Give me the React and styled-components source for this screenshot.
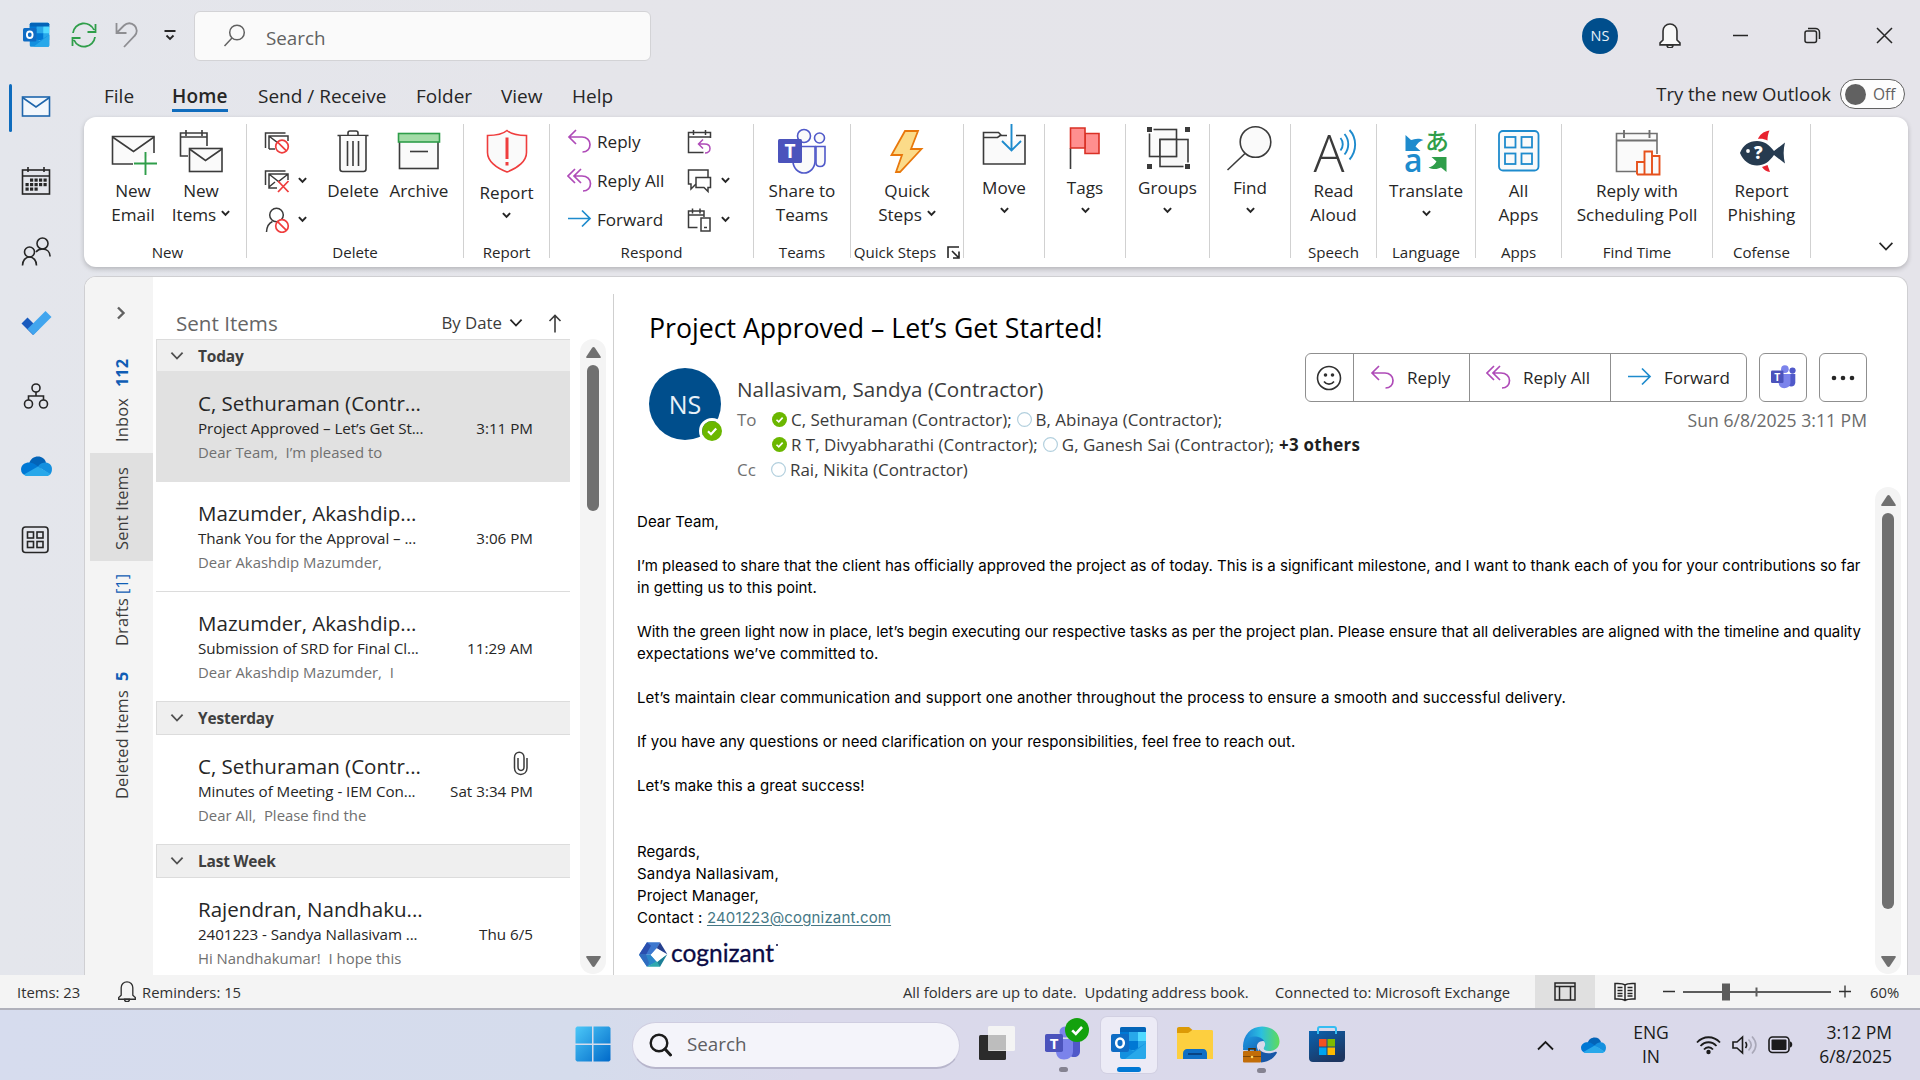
import React from "react";
import styled, { createGlobalStyle, css } from "styled-components";

const UI = `"Open Sans", "Noto Sans", sans-serif`;
const BODY = `Inter, Roboto, "Liberation Sans", sans-serif`;

const Global = createGlobalStyle`
  * { box-sizing: border-box; }
  body { margin: 0; overflow: hidden; font-family: ${UI}; color: #262626; }
  svg { display: block; flex: none; }
`;

/* ---------- shell ---------- */

const Desktop = styled.div`
  width: 1920px;
  height: 1080px;
  display: flex;
  flex-direction: column;
  background: linear-gradient(90deg, #e4e6ec 0%, #e5e5ea 30%, #e5e4ea 100%);
`;

const TitleBar = styled.header`
  height: 72px;
  display: flex;
  align-items: flex-start;
  padding: 11px 0 0 23px;
`;

const QuickAccess = styled.div`
  width: 171px;
  height: 50px;
  display: flex;
  align-items: center;
  padding-bottom: 2px;
`;

const QuickButton = styled.div`
  width: ${(p) => p.$w}px;
  display: flex;
`;

const SearchBox = styled.div`
  width: 457px;
  height: 50px;
  display: flex;
  align-items: center;
  padding: 0 0 2px 28px;
  gap: 20px;
  background: #fafafa;
  border: 1px solid #d3d3d6;
  border-radius: 6px;
  font-size: 18.8px;
  line-height: 24px;
  color: #616161;
  span { padding-top: 6px; }
`;

const WindowControls = styled.div`
  margin-left: auto;
  display: flex;
  align-items: center;
  height: 50px;
  padding-bottom: 1px;
`;

const Avatar = styled.div`
  width: ${(p) => p.$size}px;
  height: ${(p) => p.$size}px;
  flex: none;
  margin-right: ${(p) => p.$gap || 0}px;
  border-radius: 50%;
  background: #004e8c;
  color: #e8f1f8;
  font-size: ${(p) => p.$font}px;
  display: flex;
  align-items: center;
  justify-content: center;
  position: relative;
`;

const ControlSlot = styled.div`
  width: 72px;
  padding-left: ${(p) => p.$nudge || 0}px;
  display: flex;
  justify-content: center;
`;

const Middle = styled.div`
  height: 903px;
  display: flex;
`;

const Rail = styled.nav`
  width: 84px;
  display: flex;
  flex-direction: column;
  padding-top: 12px;
`;

const RailItem = styled.div`
  height: ${(p) => p.$h || 72}px;
  padding-left: 9px;
  display: flex;
  align-items: flex-start;
  svg { margin: 10px 0 0 9px; }
`;

const RailMarker = styled.div`
  width: 3px;
  height: 48px;
  border-radius: 2px;
  background: ${(p) => (p.$on ? "#0f6cbd" : "transparent")};
`;

const Main = styled.main`
  width: 1836px;
  display: flex;
  flex-direction: column;
`;

const TabRow = styled.div`
  height: 45px;
  display: flex;
  align-items: flex-start;
  padding: 11px 15px 0 20px;
`;

const Tab = styled.div`
  width: ${(p) => p.$w}px;
  font-size: 19px;
  line-height: 26px;
  font-weight: ${(p) => (p.$active ? 600 : 400)};
  letter-spacing: ${(p) => (p.$active ? 0.2 : 0)}px;
  white-space: nowrap;
  span {
    display: inline-block;
    border-bottom: 3px solid ${(p) => (p.$active ? "#0f6cbd" : "transparent")};
  }
`;

const TryNew = styled.div`
  margin: -4px 0 0 auto;
  display: flex;
  align-items: center;
  gap: 9px;
  font-size: 18.5px;
  line-height: 24px;
`;

const Toggle = styled.div`
  width: 65px;
  height: 30px;
  border: 1.5px solid #616161;
  border-radius: 15px;
  background: #fdfdfd;
  display: flex;
  align-items: center;
  gap: 7px;
  padding-left: 4px;
  font-size: 15.5px;
  color: #616161;
`;

const Knob = styled.div`
  width: 21px;
  height: 21px;
  border-radius: 50%;
  background: #616161;
`;

/* ---------- ribbon ---------- */

const Ribbon = styled.section`
  width: 1824px;
  height: 150px;
  background: #fff;
  border-radius: 12px;
  box-shadow: 0 2px 5px rgba(0, 0, 0, 0.22);
  display: flex;
  padding: 7px 0 9px;
`;

const Group = styled.div`
  width: ${(p) => p.$w}px;
  height: 134px;
  border-right: 1px solid #d1d1d1;
  display: flex;
  flex-direction: column;
`;

const GroupContent = styled.div`
  flex: 1;
  display: flex;
  justify-content: ${(p) => (p.$left !== undefined ? "flex-start" : "center")};
  padding-left: ${(p) => p.$left || 0}px;
`;

const GroupLabel = styled.div`
  height: 12px;
  line-height: 12px;
  padding-left: ${(p) => p.$shift || 0}px;
  display: flex;
  justify-content: center;
  gap: 11px;
  font-size: 15.1px;
  white-space: nowrap;
`;

const BigButton = styled.div`
  width: ${(p) => p.$w || 70}px;
  display: flex;
  flex-direction: column;
  align-items: center;
  font-size: 17.1px;
  line-height: 24px;
  white-space: nowrap;
  svg.art { margin-bottom: ${(p) => p.$drop || 0}px; }
`;

const LabelLine = styled.span`
  height: 24px;
  display: flex;
  align-items: center;
  gap: 5px;
  svg { margin-bottom: 3px; }
`;

const SmallColumn = styled.div`
  width: ${(p) => p.$w}px;
  margin-top: -2px;
  display: flex;
  flex-direction: column;
`;

const SmallButton = styled.div`
  height: 39px;
  display: flex;
  align-items: center;
  gap: ${(p) => p.$gap || 5}px;
  font-size: 17.1px;
  white-space: nowrap;
`;

const RibbonEnd = styled.div`
  flex: 1;
  display: flex;
  justify-content: flex-end;
  align-items: flex-end;
  padding: 0 14px 6px 0;
`;

/* ---------- panel ---------- */

const Panel = styled.section`
  width: 1824px;
  height: 699px;
  margin-top: 9px;
  border: 1px solid #cfcfd2;
  border-bottom: 0;
  border-radius: 12px 12px 0 0;
  background: #fff;
  display: flex;
  overflow: hidden;
`;

const FolderStrip = styled.div`
  width: 68px;
  flex: none;
  background: #f4f4f4;
  padding-left: 5px;
  display: flex;
  flex-direction: column;
`;

const StripToggle = styled.div`
  height: 73px;
  padding: 29px 0 0 26px;
`;

const Folder = styled.div`
  height: ${(p) => p.$h}px;
  background: ${(p) => (p.$selected ? "#e0e0e0" : "transparent")};
  writing-mode: vertical-rl;
  transform: rotate(180deg);
  display: flex;
  align-items: center;
  padding: ${(p) => p.$pad}px 0 0 0;
  gap: ${(p) => p.$gap || 0}px;
  font-size: 16.4px;
  line-height: 61px;
  letter-spacing: 0.2px;
  color: #3b3b3b;
  white-space: nowrap;
`;

const Count = styled.span`
  color: #0f5db5;
  font-weight: ${(p) => (p.$light ? 400 : 700)};
  letter-spacing: 0;
`;

const ListPane = styled.div`
  width: 427px;
  flex: none;
  padding-left: 3px;
  display: flex;
  flex-direction: column;
`;

const ListHeader = styled.div`
  height: 62px;
  display: flex;
  align-items: center;
  padding: 30px 18px 0 20px;
  font-size: 20.6px;
  line-height: 30px;
  color: #666;
`;

const SortBy = styled.div`
  margin-left: auto;
  display: flex;
  align-items: center;
  font-size: 16.8px;
  color: #3b3b3b;
  gap: 7px;
  padding-right: 25px;
`;

const DateHeader = styled.div`
  width: 414px;
  height: ${(p) => p.$h}px;
  flex: none;
  display: flex;
  align-items: center;
  padding-left: 13px;
  gap: 14px;
  background: #efefef;
  border: 1px solid #dcdcdc;
  border-right: 0;
  ${(p) => p.$first && css`border-bottom: 0; padding-top: 1px;`}
  font-size: 15.5px;
  font-weight: 700;
  letter-spacing: -0.2px;
  color: #3f3f3f;
`;

const Message = styled.article`
  width: 414px;
  height: ${(p) => p.$h}px;
  flex: none;
  padding: ${(p) => p.$top}px 37px 0 42px;
  background: ${(p) => (p.$selected ? "#e1e1e1" : "#fff")};
  border-bottom: ${(p) => (p.$line ? "1px solid #dcdcdc" : "0")};
`;

const MessageRow = styled.div`
  display: flex;
  justify-content: space-between;
  align-items: center;
  white-space: pre;
  height: ${(p) => p.$h}px;
  font-size: ${(p) => p.$font}px;
  color: ${(p) => p.$color || "#262626"};
  span:first-child { letter-spacing: ${(p) => p.$ls || 0}px; }
`;

const ClipSlot = styled.div`
  margin: 0 5px 5px 0;
`;

const ScrollTrack = styled.div`
  width: 26px;
  height: ${(p) => p.$h}px;
  margin-top: ${(p) => p.$top}px;
  flex: none;
  border-radius: 13px;
  background: #f4f4f4;
  display: flex;
  flex-direction: column;
  align-items: center;
  justify-content: space-between;
  padding: 8px 0 7px;
`;

const ScrollUpper = styled.div`
  display: flex;
  flex-direction: column;
  align-items: center;
  gap: 7px;
`;

const Thumb = styled.div`
  width: 12px;
  height: ${(p) => p.$h}px;
  border-radius: 6px;
  background: #707070;
`;

const Divider = styled.div`
  width: 1px;
  flex: none;
  margin: 17px 0 0 7px;
  background: #cfcfcf;
`;

/* ---------- reading pane ---------- */

const Reader = styled.div`
  width: 1293px;
  flex: none;
  display: flex;
  flex-direction: column;
`;

const Subject = styled.h1`
  margin: 0;
  height: 91px;
  padding: 34px 0 0 35px;
  font-size: 26.7px;
  line-height: 34px;
  font-weight: 400;
  color: #000;
`;

const MailHead = styled.div`
  height: 119px;
  display: flex;
  padding-left: 35px;
`;

const Presence = styled.div`
  position: absolute;
  right: -4px;
  bottom: -4px;
  border: 3px solid #fff;
  border-radius: 50%;
`;

const People = styled.div`
  width: 0;
  flex: 1;
  margin-left: 16px;
  padding-top: 7px;
`;

const SenderName = styled.div`
  font-size: 20.65px;
  line-height: 29px;
  height: 32px;
  color: #3b3b3b;
  white-space: nowrap;
`;

const AddressRow = styled.div`
  display: flex;
  align-items: center;
  height: 25.2px;
  font-size: 16.95px;
  color: #3b3b3b;
  white-space: nowrap;
`;

const AddressLabel = styled.span`
  width: ${(p) => p.$w || 35}px;
  flex: none;
  color: #707070;
`;

const Person = styled.span`
  display: flex;
  align-items: center;
  gap: 4px;
  margin-right: 5px;
`;

const Others = styled.b`
  color: #1f1f1f;
  font-weight: 700;
  letter-spacing: 0.25px;
`;

const HeadSide = styled.div`
  flex: none;
  padding-right: 40px;
  margin-top: -15px;
`;

const Actions = styled.div`
  display: flex;
  gap: 12px;
`;

const ActionGroup = styled.div`
  height: 49px;
  display: flex;
  border: 1.5px solid #8f8f8f;
  border-radius: 6px;
`;

const Action = styled.div`
  width: ${(p) => p.$w}px;
  display: flex;
  align-items: center;
  padding-left: ${(p) => p.$left}px;
  gap: 12px;
  font-size: 17px;
  color: #262626;
  white-space: nowrap;
  & + & { border-left: 1.5px solid #8f8f8f; }
`;

const SentAt = styled.div`
  margin-top: 6px;
  text-align: right;
  font-size: 17.6px;
  line-height: 24px;
  color: #6b6b6b;
`;

const MailBodyRow = styled.div`
  flex: 1;
  display: flex;
`;

const MailBody = styled.div`
  width: 1261px;
  flex: none;
  padding: 24px 0 0 23px;
  font-family: ${BODY};
  font-size: 15px;
  color: #000;
`;

const Line = styled.p`
  margin: 0;
  height: 22px;
  line-height: 22px;
  white-space: nowrap;
  letter-spacing: ${(p) => p.$ls || 0}px;
  a { color: #467886; text-decoration: underline; text-underline-offset: 2px; }
`;

const Signature = styled.div`
  padding-top: 10px;
`;

/* ---------- status bar ---------- */

const StatusBar = styled.footer`
  height: 35px;
  background: #f4f4f4;
  border-bottom: 2px solid #b0b1bb;
  display: flex;
  align-items: center;
  font-size: 14.8px;
  color: #303030;
  white-space: pre;
`;

const StatusText = styled.span`
  width: ${(p) => p.$w}px;
  padding-left: ${(p) => p.$left || 0}px;
`;

const ViewButton = styled.div`
  width: 60px;
  height: 33px;
  display: flex;
  align-items: center;
  justify-content: center;
  background: ${(p) => (p.$on ? "#e0e0e0" : "transparent")};
`;

/* ---------- taskbar ---------- */

const Taskbar = styled.div`
  height: 70px;
  display: flex;
  align-items: center;
  background: linear-gradient(90deg, #d6dcee 0%, #d5dcec 30%, #dad9eb 42%, #dad9ea 100%);
`;

const TaskIcons = styled.div`
  width: 963px;
  padding-left: 565px;
  display: flex;
  align-items: center;
`;

const TaskSearch = styled.div`
  width: 328px;
  height: 47px;
  flex: none;
  margin: 0 9px 0 1px;
  border-radius: 24px;
  border: 1px solid #cfcde0;
  border-bottom: 2px solid #b7b5cb;
  background: #f4f4fa;
  display: flex;
  align-items: center;
  padding-left: 16px;
  gap: 15px;
  font-size: 18.8px;
  color: #5d5d62;
  span { padding-bottom: 1px; }
`;

const TaskTile = styled.div`
  width: 56px;
  height: 56px;
  flex: none;
  margin-right: 10px;
  border-radius: 6px;
  display: flex;
  flex-direction: column;
  align-items: center;
  padding-top: 9px;
  position: relative;
  ${(p) => p.$active && css`background: #ecebf6; box-shadow: 0 0 0 1px #d2d0e2;`}
`;

const RunningMark = styled.i`
  width: ${(p) => (p.$active ? 24 : 9)}px;
  height: 5px;
  margin-top: 5px;
  border-radius: 3px;
  background: ${(p) => (p.$active ? "#0078d4" : "#858391")};
`;

const TileBadge = styled.div`
  position: absolute;
  right: 2px;
  top: 1px;
`;

const Tray = styled.div`
  margin-left: auto;
  display: flex;
  align-items: center;
  padding-right: 28px;
`;

const TraySlot = styled.div`
  margin-right: ${(p) => p.$gap}px;
`;

const TrayText = styled.div`
  width: ${(p) => p.$w}px;
  padding-bottom: 1px;
  text-align: ${(p) => p.$align};
  font-size: 17.5px;
  line-height: 23.5px;
  color: #191919;
  white-space: nowrap;
`;

/* ---------- icons ---------- */

const D = "#3b3b3b";
const art = { className: "art", width: 48, height: 55, viewBox: "0 0 48 55", fill: "none", strokeWidth: 1.6 };

const Caret = ({ s = 10, w = 2, c = "#262626" }) => (
  <svg width={s} height={s * 0.7} viewBox="0 0 10 7" fill="none" stroke={c} strokeWidth={w * (10 / s)}>
    <path d="M1 1.2 5 5.4 9 1.2" />
  </svg>
);

const ReplyIcon = () => (
  <svg width="25" height="25" viewBox="0 0 25 25" fill="none" stroke="#af4bb8" strokeWidth="1.7">
    <path d="M9 1 2 8l7 7M2 8h13c4.500 0 8 3 8 7.500S20 23 15.500 23" />
  </svg>
);
const ReplyAllIcon = () => (
  <svg width="25" height="25" viewBox="0 0 25 25" fill="none" stroke="#af4bb8" strokeWidth="1.7">
    <path d="M8 1 1 8l7 7M14 1 7 8l7 7M7 8h8c5 0 8.500 3 8.500 7.500S20.500 23 16 23" />
  </svg>
);
const ForwardIcon = () => (
  <svg width="25" height="25" viewBox="0 0 25 25" fill="none" stroke="#1e8bcd" strokeWidth="1.7">
    <path d="M1 11.500h22M15 3.500l8 8-8 8" />
  </svg>
);

const OutlookIcon = ({ size }) => (
  <svg width={size} height={size} viewBox="0 0 36 36">
    <rect x="9" y="1" width="26" height="24" rx="2" fill="#28a8ea" />
    <path d="M9 3a2 2 0 0 1 2-2h22a2 2 0 0 1 2 2v4H9z" fill="#0364b8" />
    <path d="M18 6h9v9h-9z" fill="#28a8ea" />
    <path d="M27 6h8v9h-8z" fill="#50d9ff" />
    <path d="M9 6h9v9H9z" fill="#0078d4" />
    <path d="M9 15h9v9H9z" fill="#0358a7" />
    <path d="M18 15h9v9h-9z" fill="#0078d4" />
    <path d="M9 18l13 7 13-8v14a2 2 0 0 1-2 2H11a2 2 0 0 1-2-2z" fill="#1490df" />
    <path d="M35 17v14a2 2 0 0 1-2 2H14z" fill="#28a8ea" />
    <rect x="0" y="8" width="18" height="18" rx="2" fill="#0f6cc4" />
    <ellipse cx="9" cy="17" rx="3.800" ry="4.400" fill="none" stroke="#fff" strokeWidth="2.500" />
  </svg>
);

const SyncIcon = () => (
  <svg width="26" height="26" viewBox="0 0 26 26" fill="none" stroke="#2f9e4a" strokeWidth="1.8">
    <path d="M2 11A11 11 0 0 1 23 8M24.500 2v8h-8M24 15A11 11 0 0 1 3 18M1.500 24v-8h8" />
  </svg>
);
const UndoIcon = () => (
  <svg width="24" height="26" viewBox="0 0 24 26" fill="none" stroke="#8e8e92" strokeWidth="1.8">
    <path d="M1.500 1v10h10M2 10.500 9 3.500c3-3 7.500-3 10.500 0s3 7.500 0 10.500L9 25" />
  </svg>
);
const CustomizeIcon = () => (
  <svg width="12" height="12" viewBox="0 0 12 12" fill="none" stroke="#262626">
    <path d="M.5 2h11" strokeWidth="2" /><path d="M2.500 6.500 6 10l3.500-3.500" strokeWidth="1.800" />
  </svg>
);
const SearchIcon = () => (
  <svg width="23" height="23" viewBox="0 0 23 23" fill="none" stroke="#616161" strokeWidth="1.5">
    <circle cx="14" cy="8.500" r="7.300" /><path d="M9 14l-7.500 8" />
  </svg>
);
const BellIcon = ({ w = 24, fill = "#f8f8f8" }) => (
  <svg width={w} height={w * 1.08} viewBox="0 0 24 26" fill={fill} stroke="#303030" strokeWidth="1.6">
    <path d="M9 22a3 3 0 0 0 6 0z" />
    <path d="M12 1c-4 0-7 3-7 7v9l-3 3v2h20v-2l-3-3V8c0-4-3-7-7-7z" />
  </svg>
);

const MailIcon = () => (
  <svg width="30" height="24" viewBox="0 0 30 24" fill="#f2f7fc" stroke="#1e66ac" strokeWidth="1.6">
    <rect x="1.500" y="3" width="27" height="19" /><path d="M1.500 3.500 15 13 28.500 3.500" fill="none" />
  </svg>
);
const CalendarIcon = () => (
  <svg width="30" height="30" viewBox="0 0 30 30" fill="none" stroke="#262626" strokeWidth="1.6">
    <rect x="1.500" y="4" width="27" height="24" /><path d="M1.500 10h27M7 1v5M23 1v5" />
    <g fill="#262626" stroke="none">
      {[[9.5, 12.5], [14, 12.5], [18.5, 12.5], [23, 12.5], [5, 17], [9.5, 17], [14, 17], [18.5, 17], [23, 17], [5, 21.5], [9.5, 21.5], [14, 21.5]].map(([x, y]) => (
        <rect key={x + "-" + y} x={x - 0.5} y={y} width="3.200" height="3.200" />
      ))}
    </g>
  </svg>
);
const PeopleIcon = () => (
  <svg width="30" height="30" viewBox="0 0 30 30" fill="none" stroke="#262626" strokeWidth="1.6">
    <circle cx="8.500" cy="15" r="5" /><path d="M1.500 28.500c0-5 3-8.500 7-8.500s7 3.500 7 8.500" />
    <circle cx="21.500" cy="6.500" r="5.500" /><path d="M15 15c1.500-2 3.500-3 6.500-3 4.500 0 7.500 3 7.500 7.500" />
  </svg>
);
const TodoIcon = () => (
  <svg width="31" height="26" viewBox="0 0 31 26">
    <path d="M.5 13.500 6.500 7.500 18 19l-6 6z" fill="#185abd" />
    <path d="M6.500 19 24.500 1l6 6L12.500 25z" fill="#41a5ee" />
  </svg>
);
const OrgIcon = () => (
  <svg width="30" height="26" viewBox="-2 0 30 26" fill="none" stroke="#262626" strokeWidth="1.6">
    <circle cx="13" cy="5" r="4" /><circle cx="5.500" cy="21" r="4" /><circle cx="20.500" cy="21" r="4" />
    <path d="M13 9v4M5.500 17v-4h15v4" />
  </svg>
);
const CloudIcon = ({ w = 31 }) => (
  <svg width={w} height={w * 0.66} viewBox="0 0 31 20.500">
    <path d="M8 8C9 3 13 .5 17 .5c4 0 7 2.500 8 6L17 14z" fill="#0364b8" />
    <path d="M0 13.500C0 9 4 6.500 8 6.500c3 0 5 1 7 2.500l6 4-16 6.500C2 19 0 16.500 0 13.500z" fill="#0078d4" />
    <path d="M17 10.500c2-3 5-4 8-4 3.500.5 6 3 6 6.500 0 3-1 4.500-2 5.500z" fill="#1490df" />
    <path d="M3 18.500 17 10.500l12.500 7.500c-1 1.500-3 2.500-5 2.500H7.500c-2 0-3.500-.8-4.500-2z" fill="#28a8ea" />
  </svg>
);
const AppsIcon = () => (
  <svg width="29" height="28" viewBox="-.5 0.500 29 28" fill="none" stroke="#262626" strokeWidth="1.6">
    <rect x="1" y="1.500" width="25.500" height="25.500" rx="3" />
    <rect x="6" y="6.500" width="6" height="6" /><rect x="15.500" y="6.500" width="6" height="6" />
    <rect x="6" y="16" width="6" height="6" /><rect x="15.500" y="16" width="6" height="6" />
  </svg>
);

const NewEmailArt = () => (
  <svg {...art} stroke={D}>
    <path d="M45 29V12.500H3.500V40H24" fill="#fafafa" /><path d="M3.500 13 24.500 27.500 45 13" />
    <path d="M25 39.500h23.500M36.500 28v23" stroke="#2f9e4a" strokeWidth="1.900" />
  </svg>
);
const NewItemsArt = () => (
  <svg {...art} stroke={D}>
    <path d="M30 22V9H3.500v23H11M3.500 13H30M9 6v6M25 6v6" fill="#fafafa" />
    <rect x="12.500" y="24.500" width="32.500" height="23" fill="#fafafa" /><path d="M12.500 25 28.500 36.500 45 25" />
  </svg>
);
const DeleteArt = () => (
  <svg {...art} stroke={D}>
    <path d="M8.500 11.500h31M19 11V9c0-1.500 1-2 2-2h6c1 0 2 .5 2 2v2" />
    <path d="M11 12v33c0 1.500 1 2.500 2.500 2.500h21c1.500 0 2.500-1 2.500-2.500V12" fill="#fafafa" /><path d="M18.500 17v25M24 17v25M29.500 17v25" />
  </svg>
);
const ArchiveArt = () => (
  <svg {...art} stroke={D}>
    <rect x="4.500" y="17" width="38.500" height="27.500" fill="#fafafa" />
    <rect x="3.500" y="9.500" width="41" height="8.500" fill="#a3dca7" stroke="#2f9e4a" /><path d="M15 27.500h18" />
  </svg>
);
const ReportArt = () => (
  <svg {...art} stroke="#ef3d3d">
    <path d="M24 6.500c4 3.500 9 5 19.500 5v17C43.500 37 35 44 24 48 13 44 4.500 37 4.500 28.500v-17c10 0 15.500-1.500 19.500-5z" fill="#fafafa" />
    <path d="M24 13.500v21.500M24 38v3.500" strokeWidth="3" />
  </svg>
);
const TeamsArt = () => (
  <svg {...art} stroke="#5059c9">
    <path d="M38 22.500h9v14.500c0 4-2.500 5.500-5 5.500s-4-1-4-4z" fill="#fafafa" />
    <path d="M15 22.500h22V37c0 7-5 12-11 12s-11-5-11-12z" fill="#fafafa" />
    <circle cx="26" cy="12" r="6.500" fill="#fafafa" /><circle cx="41.500" cy="14" r="5" fill="#fafafa" />
    <rect x="0" y="15" width="24" height="24" rx="1.500" fill="#4b53bc" stroke="none" />
    <text x="12" y="34" textAnchor="middle" fill="#fff" stroke="none" fontFamily="Open Sans" fontWeight="700" fontSize="19">T</text>
  </svg>
);
const QuickArt = () => (
  <svg {...art} stroke="#e8780c">
    <path d="M22 7h13L28 25h10.500L17 48h-4l6-17H8.500z" fill="#fbdb89" strokeWidth="1.800" />
  </svg>
);
const MoveArt = () => (
  <svg {...art} stroke={D}>
    <path d="M3.500 8.500h15l3 3H45V40H3.500z" fill="#fafafa" /><path d="M3.500 13.500h14l3.500-2.500" />
    <rect x="27" y="7" width="9" height="10" fill="#fff" stroke="none" />
    <path d="M31.500 0v26M22 17l9.500 9.500L41 17" stroke="#1e8bcd" strokeWidth="1.900" />
  </svg>
);
const TagsArt = () => (
  <svg {...art} stroke="#d93025">
    <path d="M9.500 24v21" stroke={D} /><path d="M24 9.500h14v20H24z" fill="#ff8f8f" />
    <path d="M9.500 4H24v20H9.500z" fill="#ff8f8f" />
  </svg>
);
const GroupsArt = () => (
  <svg {...art} stroke={D}>
    <rect x="5.500" y="5.500" width="27" height="27" fill="#fafafa" /><rect x="16" y="15.500" width="28" height="27" fill="#f4f4f4" fillOpacity=".6" />
    <rect x="16" y="15.500" width="16.500" height="17" fill="#fafafa" />
    <g fill="#fff" stroke="none"><rect x="2" y="2" width="7.500" height="7.500" /><rect x="39.500" y="38.500" width="7.500" height="7.500" /></g>
    <g fill={D} stroke="none"><rect x="3" y="3" width="5" height="5" /><rect x="41" y="3" width="5" height="5" /><rect x="3" y="40" width="5" height="5" /><rect x="41" y="40" width="5" height="5" /></g>
  </svg>
);
const FindArt = () => (
  <svg {...art} stroke={D}>
    <circle cx="29.500" cy="18" r="15.300" fill="#fafafa" /><path d="M19 29.500 1.500 46" />
  </svg>
);
const ReadArt = () => (
  <svg {...art}>
    <text x="3.500" y="47.500" fill={D} fontFamily="Open Sans" fontWeight="300" fontSize="51" textLength="31" lengthAdjust="spacingAndGlyphs">A</text>
    <path d="M30.500 14c3 3.500 3 9 0 12.500M34.500 10c5 6 5 14.500 0 20.500M39.500 6c7.500 8 7.500 21 0 29.500" stroke="#1e8bcd" strokeWidth="1.900" />
  </svg>
);
const TranslateArt = () => (
  <svg {...art}>
    <text x="23" y="26" fill="#2f9e4a" fontFamily="Noto Sans CJK JP" fontWeight="500" fontSize="24">あ</text>
    <text x="2" y="48" fill="#1e8bcd" fontFamily="Open Sans" fontWeight="600" fontSize="32">a</text>
    <path d="M3.500 11v16h15l-5-4.500c2-3.500 4.500-5.500 8-6.500-5-2.500-9.500-1-12.500 0z" fill="#1e8bcd" />
    <path d="M44.500 48V33h-15l5 4.500c-2 3.500-4.500 5-8 6 5 2.500 9.500 1.500 12.500 0z" fill="#2f9e4a" />
  </svg>
);
const AllAppsArt = () => (
  <svg {...art} stroke="#1e8bcd" fill="#fafafa" strokeWidth="1.800">
    <rect x="4" y="7" width="39.500" height="39.500" rx="4" />
    <rect x="10" y="13" width="10.500" height="10.500" /><rect x="26.500" y="13" width="10.500" height="10.500" />
    <rect x="10" y="29.500" width="10.500" height="10.500" /><rect x="26.500" y="29.500" width="10.500" height="10.500" />
  </svg>
);
const PollArt = () => (
  <svg {...art} stroke="#707070">
    <path d="M23 47.500H3.500v-38H44V30" fill="#fafafa" /><path d="M3.500 16.500H44M11 6v8M36.500 6v8" strokeWidth="1.900" />
    <path d="M24 50.500V38h7.500v12.500M31.500 50.500V27.500H39v23M39 32h7.500v18.500H24" stroke="#e6511c" strokeWidth="1.900" fill="#fafafa" />
  </svg>
);
const PhishArt = () => (
  <svg {...art}>
    <path d="M20 15C21.500 11 25 7.500 31.500 6.500 30 10 29.500 13 29.500 16.500 26 14.800 23 14.500 20 15z" fill="#e8222f" />
    <path d="M24 43l5.500-2 2.500 7c-3.500-.5-6-2-8-5z" fill="#e8222f" />
    <path d="M2 29C5 21 11 17 19 17c7 0 12 3.500 17 10l11-8.500c-1.800 7-1.800 14 0 21L36 31c-5 7-10 10.500-17 10.500S5 37 2 29z" fill="#263b50" />
    <circle cx="10" cy="27" r="1.900" fill="#fff" />
    <text x="16" y="35" fill="#fff" fontFamily="Open Sans" fontWeight="800" fontSize="17">?</text>
  </svg>
);

const Ban = ({ x, y }) => (
  <g stroke="#ef3d3d" strokeWidth="1.700"><circle cx={x} cy={y} r="6.300" fill="#fff" /><path d={`M${x - 4.4} ${y - 4.4}l8.800 8.800`} /></g>
);
const small = { width: 26, height: 26, viewBox: "0 0 26 26", fill: "none", stroke: D, strokeWidth: 1.5 };
const IgnoreIcon = () => (
  <svg {...small}>
    <path d="M1.500 19V4h20" /><path d="M5 20V7h19v5M5 20h6M5.500 7.500l8 6 3-2" /><Ban x={18} y={17.5} />
  </svg>
);
const CleanUpIcon = () => (
  <svg {...small}>
    <path d="M1.500 17V3h20" /><path d="M24 12V6H5v14h8M5.500 6.500l9 7 9-7M5 19l6-5" /><path d="M14 13l10.500 11M24.500 13 14 24" stroke="#ef3d3d" strokeWidth="1.800" />
  </svg>
);
const JunkIcon = () => (
  <svg {...small}>
    <circle cx="12.500" cy="8" r="6.800" /><path d="M2.500 25c.3-5 2.500-9 6-10.500" /><Ban x={18} y={19} />
  </svg>
);
const MeetingIcon = () => (
  <svg {...small}>
    <path d="M24.500 9V3.500h-22v20h15M2.500 8h22M7.500 1v5M19.500 1v5" /><path d="M17 10.500l-4.500 4.500 4.500 4.500M12.500 15h6c3.500 0 5.500 2 5.500 4.500s-2 4.500-5 4.500" stroke="#af4bb8" />
  </svg>
);
const ImIcon = () => (
  <svg {...small}>
    <path d="M22 9V2H2.500v14H5v5l5-5" /><path d="M10 9.500h14.500v10H22v4l-4-4h-8z" fill="#fff" />
  </svg>
);
const MoreRespondIcon = () => (
  <svg {...small}>
    <path d="M18 10V4H2.500v16.500h9M2.500 8H18M6.500 1.500v5M14 1.500v5" /><rect x="15" y="11" width="9" height="13" fill="#fff" /><path d="M18 20.500h3" />
  </svg>
);

const Check = ({ size, c = "#6bb700" }) => (
  <svg width={size} height={size} viewBox="0 0 20 20">
    <circle cx="10" cy="10" r="10" fill={c} /><path d="M6 10.300 9 13.200l5.200-5.700" fill="none" stroke="#fff" strokeWidth="2.200" />
  </svg>
);
const Away = () => (
  <svg width="15" height="15" viewBox="0 0 15 15"><circle cx="7.500" cy="7.500" r="6.900" fill="#fff" stroke="#b3d0de" strokeWidth="1.200" /></svg>
);
const Triangle = ({ down }) => (
  <svg width="15" height="11" viewBox="0 0 15 11" fill="#707070">
    <path d={down ? "M1 0h13c1 0 1 .8.600 1.500L9 10c-.8 1.200-2.200 1.200-3 0L.4 1.500C0 .8 0 0 1 0z" : "M1 11h13c1 0 1-.8.600-1.500L9 1C8.200-.2 6.800-.2 6 1L.4 9.500C0 10.200 0 11 1 11z"} />
  </svg>
);
const Smile = () => (
  <svg width="26" height="26" viewBox="0 0 26 26" fill="none" stroke="#303030" strokeWidth="1.600">
    <circle cx="13" cy="13" r="11.500" /><path d="M8 16.500c2.500 3.500 7.500 3.500 10 0" /><circle cx="9.500" cy="10" r="1" fill="#303030" /><circle cx="16.500" cy="10" r="1" fill="#303030" />
  </svg>
);
const TeamsLogo = ({ size }) => (
  <svg width={size} height={size} viewBox="0 0 36 36">
    <circle cx="31" cy="8" r="4.500" fill="#5059c9" /><circle cx="20" cy="6" r="5.500" fill="#7b83eb" />
    <path d="M24 13h11v12c0 4-2.500 6-6 6s-5-2-5-5z" fill="#5059c9" />
    <path d="M11 13h17v12c0 5.500-4 8.500-9 8.500s-8-3.500-8-8.500z" fill="#7b83eb" />
    <rect x="0" y="8" width="18" height="18" rx="1.800" fill="#4b53bc" />
    <text x="9" y="22.500" textAnchor="middle" fill="#fff" fontFamily="Open Sans" fontWeight="700" fontSize="15">T</text>
  </svg>
);
const ClipIcon = () => (
  <svg width="15" height="25" viewBox="0 0 15 25" fill="none" stroke="#3b3b3b" strokeWidth="1.500">
    <path d="M11 6.500V16c0 4.500-6 4.500-6 0V7M14 7v10c0 8.500-12.500 8.500-12.500 0V6.500C1.500-.5 11-.5 11 6.500" />
  </svg>
);
const CognizantMark = () => (
  <svg width="146" height="32" viewBox="0 0 146 32">
    <path d="M10 3.300h13l-3 6-6 6.500H2z" fill="#3d78cf" /><path d="M10 3.300 2 15.800h7l5-9z" fill="#2a4fae" />
    <path d="M2 15.800h12l6 7.200-10 4.700z" fill="#2b86c9" /><path d="M2 15.800h7l3 8-2 3.900z" fill="#2f6cc0" />
    <path d="M10 27.700 20 22l4-1-1 6.700z" fill="#2fa8ae" /><path d="M23 27.700l7.300-12.400L20 22.500z" fill="#1d7f96" />
    <path d="M23 3.300l7.300 12L19.700 9.300z" fill="#26408f" />
    <path d="M19.700 9.300 29 15.800 20.200 23 13.700 16z" fill="#fff" />
    <text x="34" y="22.500" fill="#0b0b45" stroke="#0b0b45" strokeWidth=".3" fontFamily="Lato" fontSize="25.500" textLength="103" lengthAdjust="spacingAndGlyphs">cognizant</text>
    <circle cx="140" cy="6" r="1" fill="#0b0b45" />
  </svg>
);

const StartIcon = () => (
  <svg width="36" height="36" viewBox="0 0 36 36">
    <defs><linearGradient id="win" x1="0" y1="0" x2="1" y2="1"><stop offset="0" stopColor="#4cc8f8" /><stop offset="1" stopColor="#0069c9" /></linearGradient></defs>
    <path d="M2 .5h15v17H.5V2zM18.500.5H34L35.500 2v15.500h-17zM.5 19H17v16.500H2L.5 34zM18.500 19h17v15L34 35.500H18.500z" fill="url(#win)" />
  </svg>
);
const TaskSearchIcon = () => (
  <svg width="23" height="24" viewBox="0 0 23 24" fill="none" stroke="#1b1b1b" strokeWidth="2.400">
    <circle cx="10" cy="10" r="8.300" /><path d="M16 16l5.500 6" strokeWidth="3" strokeLinecap="round" />
  </svg>
);
const TaskViewIcon = () => (
  <svg width="36" height="36" viewBox="0 0 36 36">
    <rect x="0" y="9" width="27" height="25" rx="1.500" fill="#2b2b2b" /><rect x="9" y="0" width="27" height="25" rx="1.500" fill="#f4f4f4" />
    <rect x="9" y="9" width="18" height="15.500" fill="#bdbdbd" />
  </svg>
);
const ExplorerIcon = () => (
  <svg width="36" height="36" viewBox="0 0 36 36">
    <path d="M0 3c0-1.200.8-2 2-2h10l3.500 3L12 8H0z" fill="#dc9a06" /><path d="M0 7h11l4.500-3H34.500c1 0 1.500.6 1.500 1.500V33H0z" fill="#fdcf3f" />
    <path d="M6 33v-5.500c0-3 2-4.500 4-4.500h16c2.500 0 4 2 4 4.500V33z" fill="#0f6fc5" /><path d="M11 28h14" stroke="#083f7c" strokeWidth="1.800" />
  </svg>
);
const EdgeIcon = () => (
  <svg width="37" height="37" viewBox="0 0 37 37">
    <defs>
      <linearGradient id="edge" x1="0" y1=".5" x2="1" y2=".5"><stop offset="0" stopColor="#1b7fd6" /><stop offset=".5" stopColor="#2bbfe0" /><stop offset="1" stopColor="#5fdc59" /></linearGradient>
      <linearGradient id="edgeInner" x1="0" y1="0" x2="1" y2="1"><stop offset="0" stopColor="#1e9be0" /><stop offset="1" stopColor="#1460b4" /></linearGradient>
    </defs>
    <path d="M0 21C0 9 8 .5 19 .5c10 0 17.500 6.500 17.500 15 0 6-4.500 9.500-10.500 9.500-4 0-6-1.500-5-3.500 1.500-2 1.500-4.500 0-6-5-4-13-1-15 7z" fill="url(#edge)" />
    <path d="M0 24C0 15 5 10.500 11 10.500c5 0 9 2 10 4.500-4.500-.5-7.500 2.500-7 6 .3 2 1 3 2 4z" fill="url(#edgeInner)" />
    <path d="M16 23c3.500 4.500 10 5.500 16 3 1.500-.6 2.500.3 1.500 1.500C30 33 25 36 18 36.500z" fill="#1757a6" />
    <rect x="0" y="25" width="18" height="11.500" rx="1" fill="#c26d08" /><path d="M6 25v-2.200h6V25" fill="none" stroke="#4d2b00" strokeWidth="1.600" />
    <rect x="0" y="30" width="18" height="1" fill="#7d4605" /><circle cx="9" cy="31" r="1.300" fill="#ffd75e" />
  </svg>
);
const StoreIcon = () => (
  <svg width="36" height="36" viewBox="0 0 36 36">
    <defs><linearGradient id="bag" x1="0" y1="0" x2=".6" y2="1"><stop offset="0" stopColor="#0a63b0" /><stop offset="1" stopColor="#1d3560" /></linearGradient></defs>
    <path d="M0 5h36v27c0 2.500-1.500 4-4 4H4c-2.500 0-4-1.500-4-4z" fill="url(#bag)" />
    <path d="M9 8V3c0-1 .6-2 1.800-2h14.400C26.400 1 27 2 27 3v5" fill="none" stroke="#35bdf2" strokeWidth="2" />
    <rect x="10" y="13" width="7.500" height="7.500" fill="#f25022" /><rect x="18.500" y="13" width="7.500" height="7.500" fill="#7fba00" />
    <rect x="10" y="21.500" width="7.500" height="7.500" fill="#00a4ef" /><rect x="18.500" y="21.500" width="7.500" height="7.500" fill="#ffb900" />
  </svg>
);
const WifiIcon = () => (
  <svg width="25" height="20" viewBox="0 0 25 20" fill="none" stroke="#1b1b1b" strokeWidth="1.800">
    <path d="M1 7.500c6.500-7 16.500-7 23 0M4.500 11c4.500-5 11.500-5 16 0M8 14.500c2.500-3 6.500-3 9 0" /><circle cx="12.500" cy="17" r="2.200" fill="#1b1b1b" stroke="none" />
  </svg>
);
const SpeakerIcon = () => (
  <svg width="25" height="20" viewBox="0 0 25 20" fill="none" stroke="#1b1b1b" strokeWidth="1.600">
    <path d="M1 7v6h4l5.500 5V2L5 7zM13.500 7c1.500 2 1.500 4 0 6" /><path d="M16.500 4.500c3.500 3.500 3.500 7.500 0 11M20 1.500c5 5.500 5 11.500 0 17" stroke="#a9a8b8" />
  </svg>
);
const BatteryIcon = () => (
  <svg width="25" height="18" viewBox="0 0 25 18">
    <rect x="1" y="1" width="20" height="15.500" rx="3.500" fill="none" stroke="#1b1b1b" strokeWidth="1.600" /><rect x="3.500" y="3.500" width="15" height="10.500" rx="1" fill="#1b1b1b" /><path d="M22 5.500c3 0 3 6 0 6z" fill="#1b1b1b" />
  </svg>
);

/* ---------- data ---------- */

const railItems = [
  [MailIcon, 72, true], [CalendarIcon, 71], [PeopleIcon, 73], [TodoIcon, 73], [OrgIcon, 73], [CloudIcon, 70], [AppsIcon, 72],
];

const tabs = [["File", 68], ["Home", 86, true], ["Send / Receive", 158], ["Folder", 85], ["View", 71], ["Help", 60]];

const mailLines = [
  ["Dear Team,", 0.07], [""],
  ["I’m pleased to share that the client has officially approved the project as of today. This is a significant milestone, and I want to thank each of you for your contributions so far", 0.014],
  ["in getting us to this point.", 0.05], [""],
  ["With the green light now in place, let’s begin executing our respective tasks as per the project plan. Please ensure that all deliverables are aligned with the timeline and quality", -0.04],
  ["expectations we’ve committed to.", 0.12], [""],
  ["Let’s maintain clear communication and support one another throughout the process to ensure a smooth and successful delivery.", 0.115], [""],
  ["If you have any questions or need clarification on your responsibilities, feel free to reach out.", 0.025], [""],
  ["Let’s make this a great success!", 0.07], [""], [""],
  ["Regards,", 0.07], ["Sandya Nallasivam,", 0.2], ["Project Manager,", 0.1],
];

const Mail = ({ from, subject, time, preview, clip, ...box }) => (
  <Message {...box}>
    <MessageRow $h={28} $font={20.55}><span>{from}</span>{clip && <ClipSlot><ClipIcon /></ClipSlot>}</MessageRow>
    <MessageRow $h={22} $font={15.2} $ls={-0.08}><span>{subject}</span><span>{time}</span></MessageRow>
    <MessageRow $h={26} $font={14.9} $color="#707070"><span>{preview}</span></MessageRow>
  </Message>
);

const Big = ({ icon: Art, w, lines, caret, below, drop }) => (
  <BigButton $w={w} $drop={drop}>
    <Art />
    {lines.map((l, i) => (
      <LabelLine key={l}>{l}{caret && i === lines.length - 1 && <Caret s={9} />}</LabelLine>
    ))}
    {below && <LabelLine><Caret s={9} /></LabelLine>}
  </BigButton>
);

const RibbonGroup = ({ w, label, left, shift, extra, children }) => (
  <Group $w={w}>
    <GroupContent $left={left}>{children}</GroupContent>
    <GroupLabel $shift={shift}>{label}{extra}</GroupLabel>
  </Group>
);

const Launcher = () => (
  <svg width="13" height="13" viewBox="0 0 13 13" fill="none" stroke="#262626" strokeWidth="1.600"><path d="M1 12V1h11M5 5l6 6M12 5.500V12H6" /></svg>
);

export default function App() {
  return (
    <Desktop>
      <Global />
      <TitleBar>
        <QuickAccess>
          <QuickButton $w={48}><OutlookIcon size={27} /></QuickButton>
          <QuickButton $w={44}><SyncIcon /></QuickButton>
          <QuickButton $w={49}><UndoIcon /></QuickButton>
          <QuickButton $w={20}><CustomizeIcon /></QuickButton>
        </QuickAccess>
        <SearchBox><SearchIcon /><span>Search</span></SearchBox>
        <WindowControls>
          <Avatar $size={36} $font={14.5} $gap={14}>NS</Avatar>
          <ControlSlot $nudge={4}><BellIcon /></ControlSlot>
          <ControlSlot><svg width="17" height="17" viewBox="0 0 17 17" stroke="#262626" strokeWidth="1.500"><path d="M1 8.500h15" /></svg></ControlSlot>
          <ControlSlot><svg width="17" height="17" viewBox="0 0 17 17" fill="none" stroke="#262626" strokeWidth="1.500"><rect x="1" y="4" width="11.500" height="11.500" rx="2" /><path d="M4 1.500h7.500c2 0 4 1.500 4 4V12" /></svg></ControlSlot>
          <ControlSlot><svg width="17" height="17" viewBox="0 0 17 17" stroke="#262626" strokeWidth="1.500"><path d="M1 1l15 15M16 1 1 16" /></svg></ControlSlot>
        </WindowControls>
      </TitleBar>

      <Middle>
        <Rail>
          {railItems.map(([Icon, h, on], i) => (
            <RailItem key={i} $h={h}><RailMarker $on={on} /><Icon /></RailItem>
          ))}
        </Rail>
        <Main>
          <TabRow>
            {tabs.map(([t, w, on]) => <Tab key={t} $w={w} $active={on}><span>{t}</span></Tab>)}
            <TryNew>Try the new Outlook<Toggle><Knob />Off</Toggle></TryNew>
          </TabRow>

          <Ribbon>
            <RibbonGroup w={163} label="New" left={15} shift={5}>
              <Big icon={NewEmailArt} w={68} lines={["New", "Email"]} />
              <Big icon={NewItemsArt} w={68} lines={["New", "Items"]} caret />
            </RibbonGroup>
            <RibbonGroup w={217} label="Delete" left={17}>
              <SmallColumn $w={54}>
                <SmallButton $gap={8}><IgnoreIcon /></SmallButton>
                <SmallButton $gap={8}><CleanUpIcon /><Caret s={9} /></SmallButton>
                <SmallButton $gap={8}><JunkIcon /><Caret s={9} /></SmallButton>
              </SmallColumn>
              <Big icon={DeleteArt} w={70} lines={["Delete"]} />
              <Big icon={ArchiveArt} w={62} lines={["Archive"]} />
            </RibbonGroup>
            <RibbonGroup w={86} label="Report"><Big icon={ReportArt} lines={["Report"]} below drop={2} /></RibbonGroup>
            <RibbonGroup w={204} label="Respond" left={17}>
              <SmallColumn $w={119}>
                <SmallButton><ReplyIcon />Reply</SmallButton>
                <SmallButton><ReplyAllIcon />Reply All</SmallButton>
                <SmallButton><ForwardIcon />Forward</SmallButton>
              </SmallColumn>
              <SmallColumn $w={50}>
                <SmallButton $gap={9}><MeetingIcon /></SmallButton>
                <SmallButton $gap={9}><ImIcon /><Caret s={9} /></SmallButton>
                <SmallButton $gap={9}><MoreRespondIcon /><Caret s={9} /></SmallButton>
              </SmallColumn>
            </RibbonGroup>
            <RibbonGroup w={97} label="Teams"><Big icon={TeamsArt} lines={["Share to", "Teams"]} /></RibbonGroup>
            <RibbonGroup w={113} label="Quick Steps" extra={<Launcher />}><Big icon={QuickArt} lines={["Quick", "Steps"]} caret /></RibbonGroup>
            <RibbonGroup w={81}><Big icon={MoveArt} lines={["Move"]} below drop={-3} /></RibbonGroup>
            <RibbonGroup w={81}><Big icon={TagsArt} lines={["Tags"]} below drop={-3} /></RibbonGroup>
            <RibbonGroup w={84}><Big icon={GroupsArt} lines={["Groups"]} below drop={-3} /></RibbonGroup>
            <RibbonGroup w={81}><Big icon={FindArt} lines={["Find"]} below drop={-3} /></RibbonGroup>
            <RibbonGroup w={86} label="Speech"><Big icon={ReadArt} lines={["Read", "Aloud"]} /></RibbonGroup>
            <RibbonGroup w={99} label="Language"><Big icon={TranslateArt} lines={["Translate"]} below /></RibbonGroup>
            <RibbonGroup w={86} label="Apps"><Big icon={AllAppsArt} lines={["All", "Apps"]} /></RibbonGroup>
            <RibbonGroup w={151} label="Find Time"><Big icon={PollArt} lines={["Reply with", "Scheduling Poll"]} /></RibbonGroup>
            <RibbonGroup w={98} label="Cofense"><Big icon={PhishArt} lines={["Report", "Phishing"]} /></RibbonGroup>
            <RibbonEnd><Caret s={16} w={1.7} /></RibbonEnd>
          </Ribbon>

          <Panel>
            <FolderStrip>
              <StripToggle>
                <svg width="10" height="14" viewBox="0 0 10 14" fill="none" stroke="#616161" strokeWidth="2.400"><path d="M2 1.500 7.500 7 2 12.500" /></svg>
              </StripToggle>
              <Folder $h={103} $pad={11} $gap={11}>Inbox <Count>112</Count></Folder>
              <Folder $h={108} $pad={11} $selected>Sent Items</Folder>
              <Folder $h={94} $pad={9} $gap={4}>Drafts <Count $light>[1]</Count></Folder>
              <Folder $h={154} $pad={10} $gap={9}>Deleted Items <Count>5</Count></Folder>
            </FolderStrip>
            <ListPane>
              <ListHeader>Sent Items
                <SortBy>By Date<Caret s={14} w={1.8} /></SortBy>
                <svg width="14" height="19" viewBox="0 0 14 19" fill="none" stroke="#3b3b3b" strokeWidth="1.600"><path d="M7 18.500V1.500M1.500 7 7 1.500 12.500 7" /></svg>
              </ListHeader>
              <DateHeader $h={32} $first><Caret s={14} w={1.8} c="#505050" />Today</DateHeader>
              <Mail $h={111} $top={18} $selected from="C, Sethuraman (Contr..." subject="Project Approved – Let’s Get St..." time="3:11 PM" preview="Dear Team,  I’m pleased to" />
              <Mail $h={110} $top={17} $line from="Mazumder, Akashdip..." subject="Thank You for the Approval – ..." time="3:06 PM" preview="Dear Akashdip Mazumder," />
              <Mail $h={109} $top={17} from="Mazumder, Akashdip..." subject="Submission of SRD for Final Cl..." time="11:29 AM" preview="Dear Akashdip Mazumder,  I" />
              <DateHeader $h={34}><Caret s={14} w={1.8} c="#505050" />Yesterday</DateHeader>
              <Mail $h={109} $top={17} clip from="C, Sethuraman (Contr..." subject="Minutes of Meeting - IEM Con..." time="Sat 3:34 PM" preview="Dear All,  Please find the" />
              <DateHeader $h={34}><Caret s={14} w={1.8} c="#505050" />Last Week</DateHeader>
              <Mail $h={96} $top={17} from="Rajendran, Nandhaku..." subject="2401223 - Sandya Nallasivam ..." time="Thu 6/5" preview="Hi Nandhakumar!  I hope this" />
            </ListPane>
            <ScrollTrack $top={62} $h={635}>
              <ScrollUpper><Triangle /><Thumb $h={146} /></ScrollUpper>
              <Triangle down />
            </ScrollTrack>
            <Divider />
            <Reader>
              <Subject>Project Approved – Let’s Get Started!</Subject>
              <MailHead>
                <Avatar $size={72} $font={25}>NS<Presence><Check size={20} /></Presence></Avatar>
                <People>
                  <SenderName>Nallasivam, Sandya (Contractor)</SenderName>
                  <AddressRow>
                    <AddressLabel>To</AddressLabel>
                    <Person><Check size={15} />C, Sethuraman (Contractor);</Person>
                    <Person><Away />B, Abinaya (Contractor);</Person>
                  </AddressRow>
                  <AddressRow>
                    <AddressLabel />
                    <Person><Check size={15} />R T, Divyabharathi (Contractor);</Person>
                    <Person><Away />G, Ganesh Sai (Contractor);</Person>
                    <Others>+3 others</Others>
                  </AddressRow>
                  <AddressRow>
                    <AddressLabel $w={34}>Cc</AddressLabel>
                    <Person><Away />Rai, Nikita (Contractor)</Person>
                  </AddressRow>
                </People>
                <HeadSide>
                  <Actions>
                    <ActionGroup>
                      <Action $w={47} $left={10}><Smile /></Action>
                      <Action $w={116} $left={16}><ReplyIcon />Reply</Action>
                      <Action $w={141} $left={16}><ReplyAllIcon />Reply All</Action>
                      <Action $w={136} $left={16}><ForwardIcon />Forward</Action>
                    </ActionGroup>
                    <ActionGroup><Action $w={46} $left={11}><TeamsLogo size={25} /></Action></ActionGroup>
                    <ActionGroup><Action $w={46} $left={11}><svg width="24" height="6" viewBox="0 0 24 6" fill="#262626"><circle cx="3" cy="3" r="2.300" /><circle cx="12" cy="3" r="2.300" /><circle cx="21" cy="3" r="2.300" /></svg></Action></ActionGroup>
                  </Actions>
                  <SentAt>Sun 6/8/2025 3:11 PM</SentAt>
                </HeadSide>
              </MailHead>
              <MailBodyRow>
                <MailBody>
                  {mailLines.map(([t, ls], i) => <Line key={i} $ls={ls}>{t}</Line>)}
                  <Line $ls={0.15}>Contact : <a>2401223@cognizant.com</a></Line>
                  <Signature><CognizantMark /></Signature>
                </MailBody>
                <ScrollTrack $top={0} $h={487}>
                  <ScrollUpper><Triangle /><Thumb $h={396} /></ScrollUpper>
                  <Triangle down />
                </ScrollTrack>
              </MailBodyRow>
            </Reader>
          </Panel>
        </Main>
      </Middle>

      <StatusBar>
        <StatusText $w={117} $left={17}>Items: 23</StatusText>
        <BellIcon w={20} fill="none" />
        <StatusText $w={766} $left={5}>Reminders: 15</StatusText>
        <StatusText $w={372}>All folders are up to date.  Updating address book.</StatusText>
        <StatusText $w={260}>Connected to: Microsoft Exchange</StatusText>
        <ViewButton $on>
          <svg width="22" height="19" viewBox="0 0 22 19" fill="none" stroke="#262626" strokeWidth="1.500"><path d="M1 1h20v17H1zM1 4.500h20M5.500 4.500V18M16.500 4.500V18" /></svg>
        </ViewButton>
        <ViewButton>
          <svg width="22" height="20" viewBox="0 0 22 20" fill="none" stroke="#262626" strokeWidth="1.500"><path d="M11 3C9 1.500 5 1.200 1 1.500v15.500c4-.3 8 0 10 1.500 2-1.500 6-1.800 10-1.500V1.500C17 1.200 13 1.500 11 3zM11 3v15.500M3.500 5.500h5M3.500 8.500h5M3.500 11.500h5M3.500 14h5M13.500 5.500h5M13.500 8.500h5M13.500 11.500h5M13.500 14h5" /></svg>
        </ViewButton>
        <svg width="205" height="20" viewBox="0 0 205 20" stroke="#5c5c5c" strokeWidth="1.500">
          <path d="M8 9.500h12M184 9.500h12M190 3.500v12" stroke="#303030" strokeWidth="1.300" /><path d="M28 10h148" strokeWidth="2" /><path d="M101.500 5.500v9" strokeWidth="2" /><rect x="67" y="1.500" width="8" height="17" fill="#5c5c5c" stroke="none" />
        </svg>
        <StatusText $w={50} $left={10}>60%</StatusText>
      </StatusBar>

      <Taskbar>
        <TaskIcons>
          <TaskTile><StartIcon /></TaskTile>
          <TaskSearch><TaskSearchIcon /><span>Search</span></TaskSearch>
          <TaskTile><TaskViewIcon /></TaskTile>
          <TaskTile><TeamsLogo size={36} /><RunningMark /><TileBadge><Check size={24} c="#13a10e" /></TileBadge></TaskTile>
          <TaskTile $active><OutlookIcon size={36} /><RunningMark $active /></TaskTile>
          <TaskTile><ExplorerIcon /></TaskTile>
          <TaskTile><EdgeIcon /><RunningMark /></TaskTile>
          <TaskTile><StoreIcon /></TaskTile>
        </TaskIcons>
        <Tray>
          <TraySlot $gap={27}><svg width="17" height="11" viewBox="0 0 17 11" fill="none" stroke="#1b1b1b" strokeWidth="1.800"><path d="M1 9.500 8.500 2 16 9.500" /></svg></TraySlot>
          <TraySlot $gap={20}><CloudIcon w={25} /></TraySlot>
          <TrayText $w={50} $align="center">ENG<br />IN</TrayText>
          <TraySlot $gap={20} />
          <TraySlot $gap={11}><WifiIcon /></TraySlot>
          <TraySlot $gap={11}><SpeakerIcon /></TraySlot>
          <TraySlot $gap={17}><BatteryIcon /></TraySlot>
          <TrayText $w={82} $align="right">3:12 PM<br />6/8/2025</TrayText>
        </Tray>
      </Taskbar>
    </Desktop>
  );
}
